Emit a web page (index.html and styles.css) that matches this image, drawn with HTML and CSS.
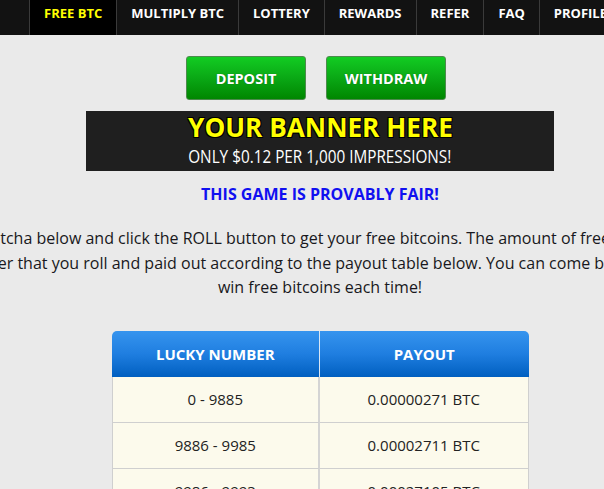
FILE: index.html
```html
<!DOCTYPE html>
<html>
<head>
<meta charset="utf-8">
<link rel="stylesheet" href="styles.css">
</head>
<body>
<div class="page">
  <nav class="nav">
    <a class="nav-item active">FREE BTC</a>
    <a class="nav-item">MULTIPLY BTC</a>
    <a class="nav-item">LOTTERY</a>
    <a class="nav-item">REWARDS</a>
    <a class="nav-item">REFER</a>
    <a class="nav-item">FAQ</a>
    <a class="nav-item">PROFILE</a>
  </nav>
  <div class="actions">
    <a class="btn">DEPOSIT</a>
    <a class="btn">WITHDRAW</a>
  </div>
  <div class="banner">
    <div class="banner-title"><span>YOUR BANNER HERE</span></div>
    <div class="banner-sub"><span>ONLY $0.12 PER 1,000 IMPRESSIONS!</span></div>
  </div>
  <h2 class="fair">THIS GAME IS PROVABLY FAIR!</h2>
  <div class="intro">
    <span class="line">Solve the captcha below and click the ROLL button to get your free bitcoins. The amount of free bitcoins that you</span>
    <span class="line line-2">depends on the lucky number that you roll and paid out according to the payout table below. You can come back and play every hour to</span>
    <span class="line">win free bitcoins each time!</span>
  </div>
  <table class="payout">
    <thead>
      <tr><th>LUCKY NUMBER</th><th>PAYOUT</th></tr>
    </thead>
    <tbody>
      <tr><td>0 - 9885</td><td>0.00000271 BTC</td></tr>
      <tr><td>9886 - 9985</td><td>0.00002711 BTC</td></tr>
      <tr><td>9986 - 9993</td><td>0.00027105 BTC</td></tr>
      <tr><td>9994 - 9997</td><td>0.00271054 BTC</td></tr>
    </tbody>
  </table>
</div>
</body>
</html>
```
FILE: styles.css
```css
html, body {
  margin: 0;
  padding: 0;
  background: #eaeaea;
  overflow: hidden;
}
body {
  font-family: "Open Sans", "DejaVu Sans", sans-serif;
  color: #222;
}
.page {
  width: 640px;
}
.nav {
  display: flex;
  height: 35px;
  background: #121212;
  padding-left: 29px;
  white-space: nowrap;
  overflow: hidden;
}
.nav-item {
  display: block;
  border-left: 1px solid #3a3a3a;
  padding: 0 14px 8px;
  line-height: 27px;
  font-size: 13px;
  font-weight: bold;
  color: #fff;
  flex: none;
}
.nav-item.active {
  background: #000;
  color: #ffff00;
}
.actions {
  display: flex;
  justify-content: center;
  gap: 20px;
  margin-top: 21px;
  padding-right: 8px;
}
.btn {
  display: flex;
  align-items: center;
  justify-content: center;
  box-sizing: border-box;
  width: 120px;
  height: 44px;
  border: 1px solid #4d8a4d;
  border-radius: 3px;
  background: linear-gradient(#12cc22, #0aa815 50%, #008700);
  color: #fff;
  font-size: 14.5px;
  font-weight: bold;
  text-shadow: 0 0 1px rgba(0,0,0,.4);
}
.banner {
  width: 468px;
  height: 60px;
  margin: 11px auto 0;
  background: #1f1f1f;
  text-align: center;
}
.banner-title {
  padding-top: 1px;
  line-height: 30px;
  font-size: 27px;
  font-weight: bold;
  color: #ffff00;
}
.banner-title span {
  display: inline-block;
  transform: scaleX(0.97);
  text-shadow: -1px -1px 0 #000, 1px -1px 0 #000, -1px 1px 0 #000, 1px 1px 0 #000;
}
.banner-sub {
  padding-top: 2px;
  line-height: 24px;
  font-size: 18px;
  color: #fff;
}
.banner-sub span {
  display: inline-block;
  transform: scaleX(0.85);
}
.fair {
  margin: 12px 0 0;
  line-height: 22px;
  font-size: 16px;
  font-weight: bold;
  color: #1010f0;
  text-align: center;
}
.intro {
  margin: 21px -300px 0;
  text-align: center;
  font-size: 16px;
  line-height: 24.5px;
  color: #181820;
}
.line {
  display: block;
  white-space: nowrap;
}
.line-2 {
  padding-right: 49px;
}
.payout {
  width: 417px;
  margin: 31px auto 0;
  border-collapse: separate;
  border-spacing: 0;
}
.payout th {
  height: 46px;
  padding: 0;
  background: linear-gradient(#3694ee, #1f7ee0 50%, #005fc0);
  color: #fff;
  font-size: 15px;
  font-weight: bold;
  width: 50%;
}
.payout th:first-child {
  border-top-left-radius: 5px;
  border-right: 1px solid #d8e6f5;
}
.payout th:last-child {
  border-top-right-radius: 5px;
}
.payout td {
  height: 45px;
  padding: 0;
  background: #fcfaec;
  text-align: center;
  font-size: 15px;
  color: #222;
  border-bottom: 1px solid #cfcfcf;
}
.payout td:first-child {
  border-left: 1px solid #cfcfcf;
  border-right: 2px solid #d4d4d4;
}
.payout td:last-child {
  border-right: 1px solid #cfcfcf;
}
```
